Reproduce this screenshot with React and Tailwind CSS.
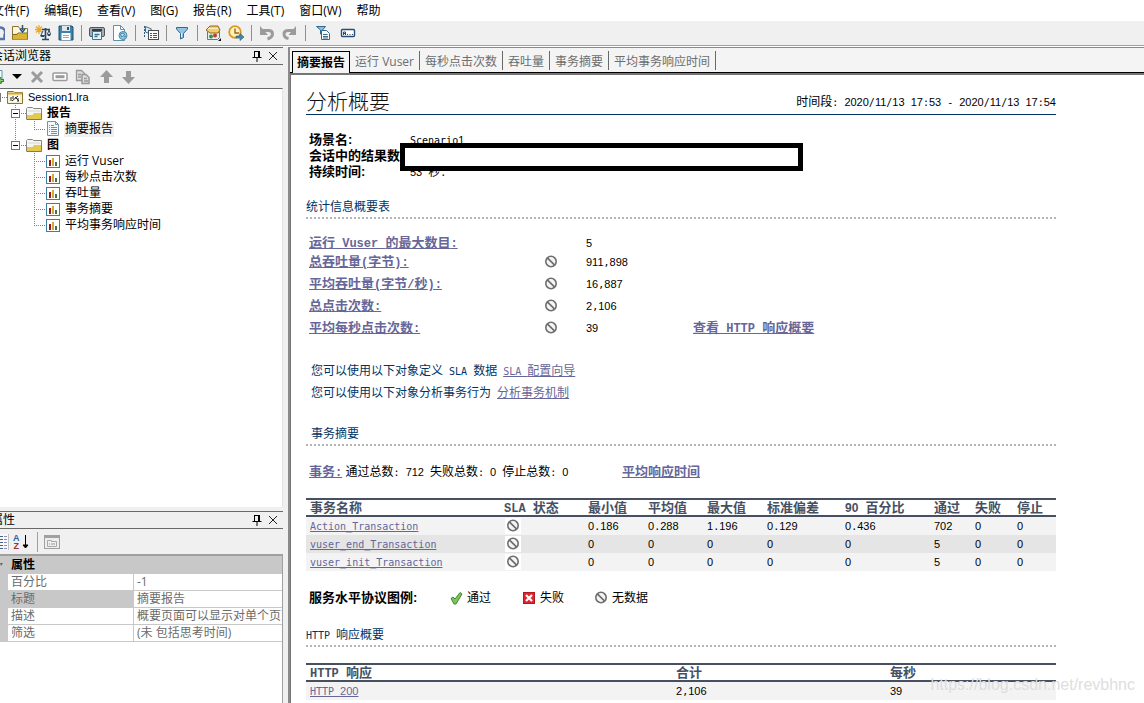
import React from "react";

const UI = "font-['Open_Sans','Noto_Sans_CJK_SC',sans-serif]";
const DOC = "font-['Liberation_Sans','Noto_Sans_CJK_SC',sans-serif]";

// Wide characters keep the inherited size; Latin letters, marks and digits get half-width faces.
function Mixed({ children, bold }) {
  return String(children)
    .split(/(\d+|[\x20-\x2f\x3a-\x7e]+)/)
    .filter(Boolean)
    .map((part, i) => {
      if (/^\d+$/.test(part))
        return (
          <span key={i} className={bold ? "text-[12px] leading-none" : "text-[11px] leading-none"}>
            {part}
          </span>
        );
      if (/^[\x20-\x7e]+$/.test(part))
        return (
          <span
            key={i}
            className={
              bold
                ? "font-['Liberation_Mono',monospace] text-[12px] leading-none"
                : "font-['DejaVu_Sans_Mono',monospace] text-[10px] leading-none"
            }
          >
            {part}
          </span>
        );
      return part;
    });
}

function Link({ children, bold }) {
  return (
    <a
      href="#"
      className={
        bold
          ? "text-[13px] leading-none font-bold text-[#666699] underline"
          : "text-[12px] leading-none text-[#666699] underline"
      }
    >
      <Mixed bold={bold}>{children}</Mixed>
    </a>
  );
}

function Svg({ children, w = 16, h = 16 }) {
  return (
    <svg width={w} height={h} viewBox={`0 0 ${w} ${h}`} fill="none" className="block shrink-0" aria-hidden="true">
      {children}
    </svg>
  );
}

function NoData() {
  return (
    <Svg>
      <circle cx="8" cy="7.5" r="5.2" stroke="#6e6e6e" strokeWidth="1.6" fill="#f6f6f6" />
      <path d="M4.3 3.8l7.4 7.4" stroke="#6e6e6e" strokeWidth="1.7" />
    </Svg>
  );
}

const icons = {
  cutDoc: (
    <Svg>
      <path d="M11 2.500a5 5 0 0 1 4.500 7.500v4h-5" stroke="#5573a6" strokeWidth="2.500" />
    </Svg>
  ),
  open: (
    <Svg>
      <path d="M.5 1.500h6l1 2h8v11H.5z" fill="#fbf6e4" stroke="#8a7430" />
      <path d="M1 9l14-1v6.500H1z" fill="#d9b536" />
      <path d="M1 9.500h4l1-1.500h9" stroke="#8a6d10" />
      <path d="M10.500 0v5M8 4l2.500 3L13 4" stroke="#24568c" strokeWidth="1.500" />
    </Svg>
  ),
  scale: (
    <Svg>
      <path d="M4 0v9M0 4.500h9M1 1.500l6 6M7 1.500l-6 6" stroke="#edab25" strokeWidth="1.300" />
      <path d="M10.500 3v11M7 4.500h8M7 14.500h7" stroke="#294b68" strokeWidth="1.700" />
      <path d="M5 10h5l-1 2H6zM12 9h4l-1 2h-2z" fill="#294b68" />
      <path d="M14 5l-1.500 4M14 5l1.500 4M8 6l-2 4" stroke="#294b68" />
    </Svg>
  ),
  save: (
    <Svg>
      <path d="M1 1h13l1 1v13H1z" fill="#3c82aa" stroke="#23516f" />
      <path d="M4 1h8v5H4z" fill="#dce7ee" />
      <path d="M9 2h2v3H9z" fill="#23516f" />
      <path d="M3.500 8h9v7h-9z" fill="#fff" />
      <path d="M5 10.500h6M5 12.500h6" stroke="#8ab0c5" />
    </Svg>
  ),
  print: (
    <Svg>
      <rect x=".5" y="2.500" width="15" height="9" rx="1.500" fill="#a5adb2" stroke="#4d565c" />
      <path d="M3 5h10" stroke="#333b42" strokeWidth="2" />
      <path d="M3.500 6.500h9v8h-9z" fill="#e9f4fa" stroke="#3c7396" />
      <path d="M5.500 9.500h5M5.500 11.500h3" stroke="#3c7396" strokeWidth="1.500" />
    </Svg>
  ),
  web: (
    <Svg>
      <path d="M1.500.5h7l4 4v11h-11z" fill="#fff" stroke="#5b93ad" />
      <path d="M8.500.5v4h4" stroke="#5b93ad" />
      <circle cx="11" cy="10.500" r="4" fill="#9acbe2" stroke="#4789ac" />
      <path d="M8.500 9l3-1 1 2-3 2zM12 12l2-1" stroke="#3e80a5" fill="#d5eef8" />
    </Svg>
  ),
  tree: (
    <Svg>
      <path d="M1.500 12V1" stroke="#2f5e80" strokeDasharray="2 1" />
      <path d="M2.500 1.500l6 2.500-4 4-2-1z" fill="#dceaf3" stroke="#3f6f91" />
      <rect x="5.500" y="5.500" width="10" height="9" fill="#fff" stroke="#4d4d4d" />
      <path d="M7 8.500h2M7 10.500h2M7 12.500h2M10 8.500h4M10 10.500h4M10 12.500h4" stroke="#555" />
    </Svg>
  ),
  filter: (
    <Svg>
      <path d="M2.500 2.500h11v1.500L9.500 8.500v4l-3 1.500V8.500L2.500 4z" fill="#93c6e5" stroke="#31698f" />
      <path d="M7.500 8v4" stroke="#e1f2fb" />
    </Svg>
  ),
  addGraph: (
    <Svg>
      <path d="M2.500 6.500h12v6l-2 2h-10z" fill="#e4eef0" stroke="#627a82" />
      <path d="M1 5l4-4h8l2 4-2 3H5z" fill="#f0cd70" stroke="#926814" />
      <path d="M3 3.500h10" stroke="#fbeebc" />
      <circle cx="6" cy="11.500" r="2" fill="#389246" />
      <circle cx="10" cy="10.500" r="2" fill="#c33b38" />
      <path d="M13 16h3v-3z" fill="#111" />
    </Svg>
  ),
  clock: (
    <Svg>
      <circle cx="7" cy="7" r="5.800" fill="#fff0bd" stroke="#d79b22" strokeWidth="1.800" />
      <path d="M7 3.500V8h4" stroke="#976817" strokeWidth="1.400" />
      <path d="M8 11h4V8.500l4 3.500-4 3.500V13H8z" fill="#4d86a6" stroke="#316681" strokeWidth=".7" />
    </Svg>
  ),
  undo: (
    <Svg>
      <path d="M4 5.500h5.500c3 0 4 1.500 4 3.500s-2 4-5 5" stroke="#9b9b9b" strokeWidth="3" />
      <path d="M1 1v9h8z" fill="#9b9b9b" />
    </Svg>
  ),
  redo: (
    <Svg>
      <path d="M11 5.500H6.500c-3 0-4.500 1.500-4.500 3.500s1.500 4 4.500 4.500" stroke="#9b9b9b" strokeWidth="3" />
      <path d="M14 1v9H6.500z" fill="#9b9b9b" />
    </Svg>
  ),
  filterDoc: (
    <Svg>
      <path d="M1.500 1.500h9L7.500 5v5l-2-1V5z" fill="#8dbdd9" stroke="#31698f" />
      <path d="M6.500 5.500h5l3 3v6h-8z" fill="#fff" stroke="#31698f" />
      <path d="M8 9.500h4.500M8 11.500h5M8 13h5" stroke="#31698f" />
    </Svg>
  ),
  label: (
    <Svg>
      <rect x="1.500" y="4.500" width="13" height="7" rx="1" fill="#fff" stroke="#254e76" strokeWidth="1.400" />
      <path d="M3.500 10V7h2v3M3.500 8.500h2M7 9.500h1M9.500 9.500h1M12 9.500h1" stroke="#254e76" />
    </Svg>
  ),
  newDoc: (
    <Svg>
      <path d="M5 1.500h9v12H5z" fill="#fff" stroke="#5b93ad" />
      <path d="M8 11.500h8M12 8v7" stroke="#2d8a35" strokeWidth="3" />
      <path d="M9 11.500h6M12 9v5" stroke="#91d475" />
    </Svg>
  ),
  remove: (
    <Svg>
      <path d="M3 3l10 10M13 3L3 13" stroke="#9b9b9b" strokeWidth="3" />
    </Svg>
  ),
  rename: (
    <Svg>
      <rect x="1" y="4" width="14" height="7.500" rx="1" fill="#fff" stroke="#9b9b9b" strokeWidth="1.500" />
      <path d="M3.500 7.700h9" stroke="#9b9b9b" strokeWidth="3" />
    </Svg>
  ),
  copy: (
    <Svg>
      <path d="M1.500 1.500h5l3 3v7h-8z" fill="#ddd" stroke="#999" strokeWidth="1.300" />
      <path d="M7 5.500h4l3 3v6H7z" fill="#ddd" stroke="#999" strokeWidth="1.500" />
      <path d="M3 5.500h3M3 8h3M9 9.500h3M9 12h4" stroke="#999" strokeWidth="1.500" />
    </Svg>
  ),
  up: (
    <Svg>
      <path d="M8.500 1L15 8h-4v6H6V8H2z" fill="#9b9b9b" />
    </Svg>
  ),
  down: (
    <Svg>
      <path d="M7.500 15L1 8h4V2h5v6h4z" fill="#9b9b9b" />
    </Svg>
  ),
};

function ToolButton({ label, icon }) {
  return (
    <button type="button" aria-label={label} className="block shrink-0">
      {icons[icon]}
    </button>
  );
}

function Sep() {
  return <span className="h-4 w-px shrink-0 bg-[#8f8f8f]" />;
}

const menus = ["文件(F)", "编辑(E)", "查看(V)", "图(G)", "报告(R)", "工具(T)", "窗口(W)", "帮助"];

const toolbar = [
  ["新建", "cutDoc"], ["打开", "open"], ["比较", "scale"], ["保存", "save"], null,
  ["打印", "print"], ["HTML 报告", "web"], null,
  ["树", "tree"], null,
  ["筛选", "filter"], null,
  ["添加图", "addGraph"], ["时间", "clock"], null,
  ["撤消", "undo"], ["重做", "redo"], null,
];

function PanelTitle({ children }) {
  return (
    <header className="flex h-[18px] shrink-0 items-center justify-between border-y border-[#696969] pr-1">
      <h2 className="-ml-[9px] text-[12px] leading-4 whitespace-nowrap">{children}</h2>
      <span className="flex items-center gap-1">
        <button type="button" aria-label="固定">
          <Svg w={12} h={12}>
            <path d="M3.500 1v6M3 1.500h5M1.500 7.500h9M6 8v4" stroke="#000" />
            <path d="M7 1h2v6H7z" fill="#000" />
          </Svg>
        </button>
        <button type="button" aria-label="关闭">
          <Svg w={12} h={12}>
            <path d="M2 2l8 8M10 2l-8 8" stroke="#222" />
          </Svg>
        </button>
      </span>
    </header>
  );
}

const DOT = { stroke: "#808080", strokeDasharray: "1 1" };

function Branch({ label, last }) {
  return (
    <div className="flex h-4 items-center">
      <Svg w={26}>
        <path d={last ? "M15.500 0v4" : "M15.500 0v16"} {...DOT} />
        <path d="M21 8.500h5" {...DOT} />
        <rect x="11.500" y="4.500" width="8" height="8" fill="#fff" stroke="#777" />
        <path d="M13 8.500h5" stroke="#000" />
      </Svg>
      <Svg>
        <path d="M.5 14V3.500l1-1h5l1 1h8V14z" fill="#f5f5f2" stroke="#85847c" />
        <path d="M1 10h5.500l1.500-2H15v6H1z" fill="#e5c94f" />
        <path d="M.5 14.500h15V8" stroke="#9a7b18" />
        <path d="M2 6h12" stroke="#d6d6d2" />
      </Svg>
      <span className="ml-[5px] text-[12px] leading-4 font-bold">{label}</span>
    </div>
  );
}

function Leaf({ label, doc, last }) {
  return (
    <div className="flex h-4 items-center">
      <Svg w={46}>
        {doc && <path d="M15.500 0v16" {...DOT} />}
        <path d={last ? "M34.500 0v9" : "M34.500 0v16"} {...DOT} />
        <path d="M34 8.500h12" {...DOT} />
      </Svg>
      {doc ? (
        <Svg>
          <path d="M1.500.5h8l3 3v11h-11z" fill="#f3f8fb" stroke="#7791a3" />
          <path d="M3 4.500h1M3 6.500h1M3 8.500h1M3 10.500h1" stroke="#c78a36" />
          <path d="M5 4.500h3M5 6.500h6M5 8.500h6M5 10.500h6M5 12.500h6" stroke="#5d93b5" />
          <path d="M9.500.5v3h3" stroke="#7791a3" />
        </Svg>
      ) : (
        <Svg>
          <rect x=".5" y="2.500" width="13" height="12" fill="#fff" stroke="#3f7da0" />
          <path d="M3 7h2v6H3z" fill="#a41218" />
          <path d="M6 5h2v8H6z" fill="#d3a638" />
          <path d="M9 9h2v4H9z" fill="#397a36" />
        </Svg>
      )}
      <span className={doc ? "ml-[2px] bg-[#f0f0f0] px-px text-[12px]" : "ml-[3px] text-[12px]"}>{label}</span>
    </div>
  );
}

const properties = [
  ["百分比", "-1"],
  ["标题", "摘要报告"],
  ["描述", "概要页面可以显示对单个页面"],
  ["筛选", "(未 包括思考时间)"],
];

function Sidebar() {
  return (
    <aside className="flex w-[288px] shrink-0 flex-col overflow-hidden pr-[5px]">
      <section className="flex min-h-0 flex-1 flex-col">
        <PanelTitle>会话浏览器</PanelTitle>
        <div className="flex h-[23px] shrink-0 items-center gap-[7px]">
          <span className="-ml-3 flex items-center gap-2">
            <ToolButton label="新建项" icon="newDoc" />
            <button type="button" aria-label="更多">
              <Svg w={10} h={6}>
                <path d="M0 0h10L5 5z" fill="#000" />
              </Svg>
            </button>
          </span>
          <ToolButton label="删除" icon="remove" />
          <ToolButton label="重命名" icon="rename" />
          <ToolButton label="复制" icon="copy" />
          <ToolButton label="上移" icon="up" />
          <ToolButton label="下移" icon="down" />
        </div>
        <div className="min-h-0 flex-1 overflow-hidden border-t border-r border-t-[#696969] border-r-[#e3e3e3] bg-white leading-4 whitespace-nowrap">
          <div className="flex h-4 items-center">
            <Svg w={7}>
              <path d="M.5 4v9" stroke="#777" />
              <path d="M2 8.500h5" {...DOT} />
            </Svg>
            <Svg>
              <path d="M.5 14.500V2.500h6l1 1h8v11z" fill="#f8efcb" stroke="#8c7430" />
              <path d="M1 4.500h14" stroke="#d0ad38" strokeWidth="2" />
              <path d="M3 7h10v6H3z" fill="#fff" />
              <path d="M4 8v4M5 12l6-5M8 8l4 4M6 7v3M11 9v4" stroke="#222" />
            </Svg>
            <span className="ml-[5px] font-['Liberation_Sans',sans-serif] text-[11px]">Session1.lra</span>
          </div>
          <Branch label="报告" />
          <Leaf label="摘要报告" doc last />
          <Branch label="图" last />
          <Leaf label="运行 Vuser" />
          <Leaf label="每秒点击次数" />
          <Leaf label="吞吐量" />
          <Leaf label="事务摘要" />
          <Leaf label="平均事务响应时间" last />
        </div>
      </section>
      <section className="mt-1 flex h-[192px] shrink-0 flex-col">
        <PanelTitle>属性</PanelTitle>
        <div className="flex h-[25px] shrink-0 items-center">
          <button type="button" aria-label="按类别" className="-ml-2 border-r border-[#c0c0c0] bg-[#f8f8f8]">
            <Svg>
              <path d="M8 2.500h3M8 5.500h3M8 8.500h3M8 11.500h3M8 14.500h3" stroke="#4c5f8b" />
              <path d="M12 2.500h3M12 5.500h3M12 8.500h3M12 11.500h3M12 14.500h3" stroke="#8292bd" />
            </Svg>
          </button>
          <button type="button" aria-label="按字母" className="ml-1 flex w-[18px] items-center">
            <span className="flex flex-col font-['Liberation_Sans',sans-serif] text-[9px] leading-2 font-bold">
              <span className="text-[#2f5cad]">A</span>
              <span className="text-[#a33030]">Z</span>
            </span>
            <Svg w={10}>
              <path d="M5.500 1v12M3 11l2.500 3L8 11z" stroke="#000" fill="#000" />
            </Svg>
          </button>
          <span className="mx-[6px] h-5 w-px bg-[#a0a0a0]" />
          <button type="button" aria-label="属性页">
            <Svg>
              <rect x=".5" y="1.500" width="15" height="13" fill="#eee" stroke="#a0a0a0" />
              <path d="M1 3h14" stroke="#a0a0a0" strokeWidth="2" />
              <path d="M3.500 12.500v-6h4v1h5v5z" stroke="#a8a8a8" />
              <path d="M5 10h1M7 10h4" stroke="#999" />
            </Svg>
          </button>
        </div>
        <div className="min-h-0 flex-1 border-t-2 border-r border-[#a0a0a0] bg-white">
          <table className="w-full table-fixed border-separate border-spacing-0 text-[12px] leading-4 text-[#6b6b6b]">
            <colgroup>
              <col className="w-[8px]" />
              <col className="w-[126px]" />
              <col />
            </colgroup>
            <thead>
              <tr className="h-[18px] bg-[#c8c8c8] text-left text-black">
                <th className="p-0 font-normal">
                  <Svg w={4} h={4}>
                    <path d="M0 0h3L1 3z" fill="#666" />
                  </Svg>
                </th>
                <th colSpan={2} className="p-0 pl-[3px]">
                  属性
                </th>
              </tr>
            </thead>
            <tbody>
              {properties.map(([k, v], i) => (
                <tr key={k} className="h-[17px]">
                  <td className="bg-[#c8c8c8] p-0" />
                  <td
                    className={
                      i === 1
                        ? "border-r border-b border-[#c8c8c8] bg-[#c8c8c8] p-0 pl-[3px]"
                        : "border-r border-b border-[#c8c8c8] p-0 pl-[3px]"
                    }
                  >
                    {k}
                  </td>
                  <td className="overflow-hidden border-b border-[#c8c8c8] p-0 pl-[3px] whitespace-nowrap">{v}</td>
                </tr>
              ))}
            </tbody>
          </table>
        </div>
      </section>
    </aside>
  );
}

const tabs = ["运行 Vuser", "每秒点击次数", "吞吐量", "事务摘要", "平均事务响应时间"];

const stats = [
  ["总吞吐量(字节):", "911,898"],
  ["平均吞吐量(字节/秒):", "16,887"],
  ["总点击次数:", "2,106"],
  ["平均每秒点击次数:", "39"],
];

const txHead = ["最小值", "平均值", "最大值", "标准偏差", "90 百分比", "通过", "失败", "停止"];
const txRows = [
  ["Action_Transaction", "0.186", "0.288", "1.196", "0.129", "0.436", "702", "0", "0"],
  ["vuser_end_Transaction", "0", "0", "0", "0", "0", "5", "0", "0"],
  ["vuser_init_Transaction", "0", "0", "0", "0", "0", "5", "0", "0"],
];

function SectionTitle({ children, className = "" }) {
  return (
    <h2 className={`h-[21px] border-b-2 border-dotted border-[#b4b4bc] text-[12px] leading-[18px] text-[#003366] ${className}`}>
      <Mixed>{children}</Mixed>
    </h2>
  );
}

const TH = "border-y-2 border-[#475063] p-0 text-left text-[13px] font-bold leading-[15px] text-[#475063]";

function Report() {
  return (
    <article className={`w-full max-w-[750px] text-[12px] whitespace-nowrap text-black ${DOC}`}>
      <header className="flex h-[25px] items-center justify-between border-b border-[#003366]">
        <h1 className="text-[21px] leading-6 font-light text-[#111]">分析概要</h1>
        <p>
          <Mixed>时间段: 2020/11/13 17:53 - 2020/11/13 17:54</Mixed>
        </p>
      </header>

      <div className="relative mt-[17px] pl-[3px]">
        <dl className="grid grid-cols-[101px_1fr] leading-4">
          <dt className="text-[13px] font-bold">场景名:</dt>
          <dd><Mixed>Scenario1</Mixed></dd>
          <dt className="text-[13px] font-bold">会话中的结果数:</dt>
          <dd />
          <dt className="text-[13px] font-bold">持续时间:</dt>
          <dd><Mixed>53 秒.</Mixed></dd>
        </dl>
        <div className="absolute top-[11px] left-[94px] h-7 w-[403px] border-[5px] border-black bg-white" />
      </div>

      <SectionTitle className="mt-[18px]">统计信息概要表</SectionTitle>
      <table className="mt-4 w-full table-fixed border-separate border-spacing-0 leading-4">
        <colgroup>
          <col className="w-[237px]" />
          <col className="w-[43px]" />
          <col className="w-[107px]" />
          <col />
        </colgroup>
        <tbody>
          <tr className="h-4">
            <td className="p-0 pl-[3px]"><Link bold>运行 Vuser 的最大数目:</Link></td>
            <td className="p-0" />
            <td className="p-0"><Mixed>5</Mixed></td>
            <td className="p-0" />
          </tr>
          {stats.map(([name, value], i) => (
            <tr key={name} className="h-[22px]">
              <td className="p-0 pl-[3px]"><Link bold>{name}</Link></td>
              <td className="p-0"><NoData /></td>
              <td className="p-0"><Mixed>{value}</Mixed></td>
              <td className="p-0">{i === 3 && <Link bold>查看 HTTP 响应概要</Link>}</td>
            </tr>
          ))}
        </tbody>
      </table>

      <div className="mt-[21px] pl-[5px] leading-[22px] text-[#003366]">
        <p><Mixed>您可以使用以下对象定义 SLA 数据 </Mixed><Link>SLA 配置向导</Link></p>
        <p><Mixed>您可以使用以下对象分析事务行为 </Mixed><Link>分析事务机制</Link></p>
      </div>

      <SectionTitle className="mt-[21px] pl-[5px]">事务摘要</SectionTitle>
      <div className="mt-[17px] grid grid-cols-[313px_1fr] pl-[3px] leading-[18px]">
        <p>
          <Link bold>事务:</Link> <Mixed>通过总数: 712 失败总数: 0 停止总数: 0</Mixed>
        </p>
        <p><Link bold>平均响应时间</Link></p>
      </div>

      <table className="mt-[17px] w-full table-fixed border-separate border-spacing-0 leading-[18px]">
        <colgroup>
          <col className="w-[198px]" />
          <col className="w-[84px]" />
          <col className="w-[60px]" />
          <col className="w-[59px]" />
          <col className="w-[60px]" />
          <col className="w-[78px]" />
          <col className="w-[89px]" />
          <col className="w-[41px]" />
          <col className="w-[42px]" />
          <col />
        </colgroup>
        <thead>
          <tr>
            <th className={`${TH} pl-1`}>事务名称</th>
            <th className={TH}><Mixed bold>SLA 状态</Mixed></th>
            {txHead.map((h) => (
              <th key={h} className={TH}><Mixed bold>{h}</Mixed></th>
            ))}
          </tr>
        </thead>
        <tbody>
          {txRows.map(([name, ...cells]) => (
            <tr key={name} className="h-[18px] bg-[#f3f3f3] even:bg-[#e5e5e5]">
              <td className="p-0 pl-1"><Link>{name}</Link></td>
              <td className="p-0 pl-px"><span className="block w-4 bg-white"><NoData /></span></td>
              {cells.map((c, i) => (
                <td key={i} className="p-0"><Mixed>{c}</Mixed></td>
              ))}
            </tr>
          ))}
        </tbody>
      </table>

      <div className="mt-[18px] grid grid-cols-[139px_73px_72px_1fr] pl-[3px] leading-[18px]">
        <strong className="text-[13px]">服务水平协议图例:</strong>
        <span className="flex items-center gap-[3px]">
          <Svg>
            <path d="M3 8.500l2-1.500 2 2 5-6.500 2 1.500-6 10H6z" fill="#80c25c" stroke="#448438" />
          </Svg>
          通过
        </span>
        <span className="flex items-center gap-[3px]">
          <Svg>
            <rect x="2.500" y="2.500" width="11" height="11" fill="#dd2532" stroke="#b5171f" />
            <path d="M5 5l6 6M11 5l-6 6" stroke="#fff" strokeWidth="2.200" />
          </Svg>
          失败
        </span>
        <span className="flex items-center gap-[3px]">
          <NoData />
          无数据
        </span>
      </div>

      <SectionTitle className="mt-[19px]">HTTP 响应概要</SectionTitle>
      <table className="mt-4 w-full table-fixed border-separate border-spacing-0 leading-[18px]">
        <colgroup>
          <col className="w-[370px]" />
          <col className="w-[214px]" />
          <col />
        </colgroup>
        <thead>
          <tr>
            <th className={`${TH} pl-1`}><Mixed bold>HTTP 响应</Mixed></th>
            <th className={TH}>合计</th>
            <th className={TH}>每秒</th>
          </tr>
        </thead>
        <tbody>
          <tr className="h-[18px] bg-[#f3f3f3]">
            <td className="p-0 pl-1"><Link>HTTP 200</Link></td>
            <td className="p-0"><Mixed>2,106</Mixed></td>
            <td className="p-0"><Mixed>39</Mixed></td>
          </tr>
        </tbody>
      </table>
    </article>
  );
}

export default function App() {
  return (
    <div className={`relative flex h-screen flex-col overflow-hidden bg-[#f0f0f0] text-black ${UI}`}>
      <nav className="flex h-[21px] shrink-0 items-center gap-[15px] bg-white text-[12px] leading-5 whitespace-nowrap">
        {menus.map((m) => (
          <button key={m} type="button" className="first:-ml-2">
            {m}
          </button>
        ))}
      </nav>
      <div className="flex h-[25px] shrink-0 items-center gap-[7px] border-b border-[#a0a0a0]">
        <span className="-ml-[18px]" />
        {toolbar.map((t, i) => (t ? <ToolButton key={i} label={t[0]} icon={t[1]} /> : <Sep key={i} />))}
        <span className="flex gap-[9px] pl-[2px]">
          <ToolButton label="全局筛选" icon="filterDoc" />
          <ToolButton label="注释" icon="label" />
        </span>
      </div>
      <div className="flex min-h-0 flex-1 border-t border-white">
        <Sidebar />
        <main className="flex min-w-0 flex-1 flex-col border-t border-l-2 border-[#8a8a8a] bg-[#f4f4f4]">
          <div role="tablist" className="flex shrink-0 border-b border-black pt-[3px] pl-[2px] text-[12px] whitespace-nowrap">
            <button
              type="button"
              role="tab"
              aria-selected="true"
              className="-mb-px h-[22px] border-x border-t border-black bg-[#f4f4f4] px-1 leading-5 font-bold"
            >
              摘要报告
            </button>
            {tabs.map((t) => (
              <button
                key={t}
                type="button"
                role="tab"
                aria-selected="false"
                className="h-[19px] border-r border-[#696969] px-[5px] leading-[22px] text-[#6d6d6d]"
              >
                {t}
              </button>
            ))}
          </div>
          <div className="min-h-0 flex-1 overflow-hidden border-t-2 border-l border-[#757575] bg-white px-[15px] pt-[15px]">
            <Report />
          </div>
        </main>
      </div>
      <span className="pointer-events-none absolute right-[9px] bottom-2 font-['Liberation_Sans',sans-serif] text-[16px] leading-5 text-[#dedede]">
        https://blog.csdn.net/revbhnc
      </span>
    </div>
  );
}
